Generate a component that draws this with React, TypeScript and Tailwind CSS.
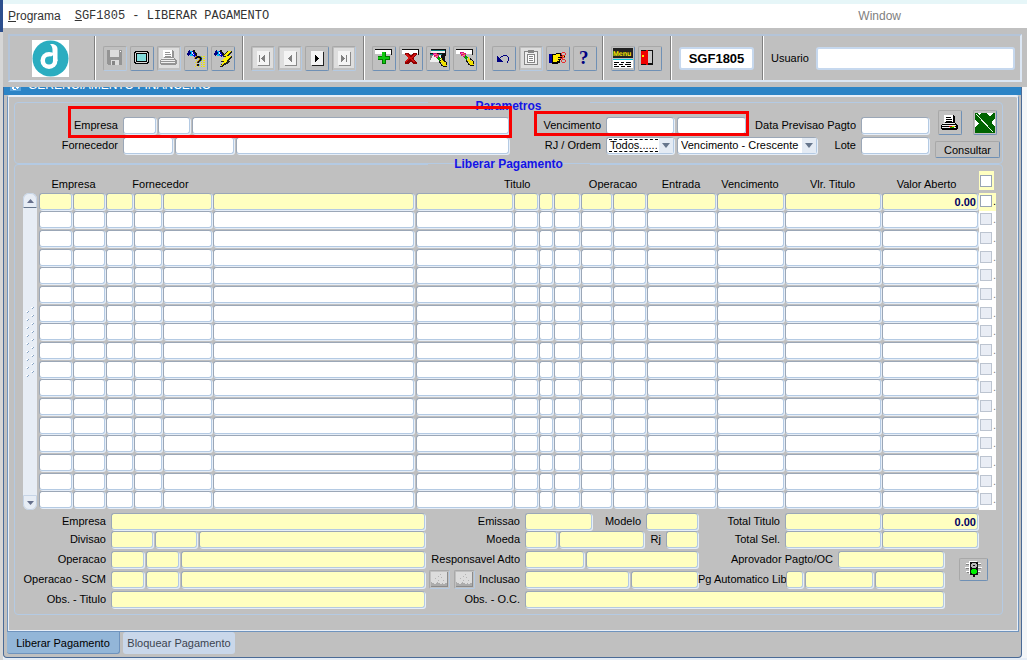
import { ReactNode, useState } from 'react';
import clsx from 'clsx';

const box =
  'h-[17px] min-w-0 rounded-[3px] border border-t-[#9ba7b7] border-l-[#9ba7b7] border-r-[#b4cae3] border-b-[#b4cae3] shadow-[1px_1px_0_#e6eef8] outline-none';

const columns = [
  { name: 'Empresa', col: 'w-[34px]' },
  { name: 'Filial', col: 'w-[33px]' },
  { name: 'Fornecedor tipo', col: 'w-[28px]' },
  { name: 'Fornecedor grupo', col: 'w-[29px]' },
  { name: 'Fornecedor codigo', col: 'w-[50px]' },
  { name: 'Fornecedor nome', col: '' },
  { name: 'Titulo', col: 'w-[98px]' },
  { name: 'Titulo serie', col: 'w-[25px]' },
  { name: 'Titulo parcela', col: 'w-[15px]' },
  { name: 'Titulo tipo', col: 'w-[27px]' },
  { name: 'Operacao', col: 'w-[32px]' },
  { name: 'Operacao codigo', col: 'w-[34px]' },
  { name: 'Entrada', col: 'w-[70px]' },
  { name: 'Vencimento', col: 'w-[68px]' },
  { name: 'Vlr. Titulo', col: 'w-[97px]' },
  { name: 'Valor Aberto', col: 'w-[97px]' },
];

const rows = Array.from({ length: 17 }, (_, i) => i);

type FieldProps = { id?: string; name?: string; className?: string; yellow?: boolean; value?: string };

function Field({ id, name, className, yellow, value }: FieldProps) {
  return (
    <input
      id={id}
      aria-label={name}
      defaultValue={value}
      className={clsx(
        box,
        'px-px text-[11px]',
        yellow ? 'bg-[#ffffc0]' : 'bg-white',
        value && 'text-right font-bold text-[#000060]',
        className
      )}
    />
  );
}

function Label({ id, className, children }: { id: string; className?: string; children: ReactNode }) {
  return (
    <label htmlFor={id} className={clsx('shrink-0 pb-[2px] text-right whitespace-nowrap', className)}>
      {children}
    </label>
  );
}

function ToolButton({ name, disabled, light, children }: { name: string; disabled?: boolean; light?: boolean; children: ReactNode }) {
  return (
    <button
      type="button"
      aria-label={name}
      disabled={disabled}
      className={clsx(
        'flex h-[25px] w-6 shrink-0 items-center justify-center rounded-[2px] border border-t-[#a8a8a8] border-l-[#a8a8a8]',
        disabled ? 'border-r-[#b4cae3] border-b-[#b4cae3]' : 'border-r-[#6f90b5] border-b-[#6f90b5]'
      )}
    >
      <svg
        width="20"
        height="20"
        viewBox="0 0 20 20"
        shapeRendering="crispEdges"
        aria-hidden="true"
        className={light ? 'bg-[#dedede]' : ''}
      >
        {children}
      </svg>
    </button>
  );
}

function Torch() {
  return (
    <>
      <path d="M3 2h1v1h1v3h-1v1h-1v1h-1v-1h-1v-2h1v-2h1z" fill="#000080" />
      <path d="M4 3h2v4h1v1h-3v-2h1v-2h-1z" fill="#00b8f0" />
      <path d="M6 3h1v1h2v1h1v3h-1v1h-1v-1h-1v-1h-1z" fill="#0000d0" />
      <path d="M7 2h2v2h1v1h-2v-1h-1zM9 5h2v3h-1v-1h-1z" fill="#111" />
      <path d="M6 4h1v2h-1zM7 6h1v1h-1z" fill="#f4f4f4" />
    </>
  );
}

function Brush() {
  return (
    <g>
      <path d="M4 4h4v1h2v3h1v1h-4v-1h-2v-2h-1z" fill="#d01080" />
      <path d="M5 5h2v1h-2zM7 7h2v1h-2z" fill="#ff60c0" />
      <path d="M7 5h1v1h-1zM6 7h1v1h-1zM8 6h1v1h-1z" fill="#ff9020" />
      <path d="M9 7h1v1h1v1h1v1h-1v2h-1v-1h-1v-1h-1v-1h1z" fill="#00a000" />
      <path d="M12 9h1v2h2v2h2v3h1v1h-4v-1h-1v-2h-2v-2h1z" fill="#f0e000" />
      <path d="M10 12h1v1h1v2h1v1h1v1h-2v-2h-1v-1h-1zM14 10h1v1h1v1h1v1h-1v-1h-2zM17 13h1v3h-1zM14 17h4v1h-4z" fill="#111" />
    </g>
  );
}

function Bar() {
  return (
    <>
      <path d="M1 1h17v6h-1v-5h-16z" fill="#111" />
      <path d="M1 2h16v4h-16z" fill="#fff" />
    </>
  );
}

function NavIcon({ dark, children }: { dark?: boolean; children: ReactNode }) {
  return (
    <>
      <path d="M5 4h12v14h-12z" fill={dark ? '#222' : '#8a8a8a'} />
      <path d="M4 3h12v14h-12z" fill="#f4f4f4" />
      <g fill={dark ? '#000' : '#808080'}>{children}</g>
    </>
  );
}

function Printer({ muted }: { muted?: boolean }) {
  const dark = muted ? '#949494' : '#000';
  return (
    <>
      <path d="M5 2h9v1h1v7h1v1h-12v-1h1z" fill={dark} />
      <path d="M4 2h9v7h-9z" fill="#fff" />
      <path d="M6 4h5v1h-5zM6 6h6v1h-6zM6 8h6v1h-6z" fill={dark} />
      <path d="M2 11h15v1h1v4h-1v1h-15v-1h-1v-4h1z" fill={dark} />
      <path d="M3 10h12v1h-12zM2 12h14v1h-14zM2 14h14v1h-14z" fill="#f0f0f0" />
      {!muted && (
        <>
          <path d="M9 13h3v1h-3z" fill="#e00000" />
          <path d="M12 13h3v1h-3z" fill="#e8d800" />
          <path d="M10 14h4v1h-4z" fill="#00a000" />
        </>
      )}
    </>
  );
}

function Group({ className, children }: { className?: string; children: ReactNode }) {
  return (
    <div
      className={clsx(
        'flex shrink-0 items-center gap-[3px] border-r border-l border-r-[#808080] border-l-white pl-[7px]',
        className
      )}
    >
      {children}
    </div>
  );
}

function Toolbar() {
  return (
    <div className="h-[59px] bg-[#c0c0c0] px-[5px] pt-[6px]">
      <div className="flex h-[48px] border-2 border-t-[#b4c4d8] border-r-[#dce7f4] border-b-[#dce7f4] border-l-[#b4c4d8]">
        <div className="flex w-[85px] shrink-0 items-center justify-center border-r border-[#808080] pr-[3px]">
          <svg width="37" height="37" viewBox="0 0 37 37" role="img" aria-label="Logo">
            <rect width="37" height="37" fill="#fff" />
            <circle cx="18.500" cy="18.500" r="18" fill="#2badc0" />
            <circle cx="17" cy="20.500" r="8.500" fill="#fff" />
            <path d="M18 4c4-.5 7.500 1 7.500 5v12l-5-2v-9c0-2.500-.8-4.500-2.500-6z" fill="#fff" />
            <circle cx="17" cy="20.500" r="4" fill="#2badc0" />
            <path d="M17 16.500c2 0 3.500-.5 4-1.500v5z" fill="#2badc0" />
          </svg>
        </div>
        <Group className="w-[148px]">
          <ToolButton name="Salvar" disabled>
            <path d="M2 2h15v15h-14v-1h-1z" fill="#949494" />
            <path d="M5 2h9v7h-9zM6 12h8v5h-8z" fill="#dcdcdc" />
            <path d="M7 13h3v4h-3z" fill="#858585" />
            <path d="M15 3h1v1h-1z" fill="#fff" />
          </ToolButton>
          <ToolButton name="Tela">
            <path d="M3 3h13v1h1v11h-1v1h-13v-1h-1v-11h1z" fill="#000" />
            <path d="M4 4h11v1h1v9h-1v1h-11v-1h-1v-9h1z" fill="#d8d8d8" />
            <path d="M4 5h11v9h-11z" fill="#000" />
            <path d="M5 6h9v7h-9z" fill="#84dede" />
          </ToolButton>
          <ToolButton name="Imprimir" disabled light>
            <Printer muted />
          </ToolButton>
          <ToolButton name="Consultar ajuda">
            {[0, 1, 2, 3, 4, 5].map(i => (
              <path key={i} d={`M${i % 2 ? 9 : 10} ${i * 2 + 8}h1v1h-1zM12 ${i * 2 + 8}h1v1h-1zM15 ${i * 2 + 8}h1v1h-1zM17 ${i * 2 + 8}h2v1h-2z`} fill="#f0e800" />
            ))}
            <Torch />
            <text x="8" y="18" fontSize="14" fontWeight="700" fontFamily="Liberation Sans, sans-serif" fill="#000">?</text>
          </ToolButton>
          <ToolButton name="Executar consulta">
            <Torch />
            <path d="M14 3h5v1l-3 4h3v1l-4 4h2v1l-8 5h-2l3-5h-2v-1l4-4h-2v-1z" fill="#222" />
            <path d="M15 3h3l-4 5h4l-5 5h2l-7 5 3-5h-2l4-5h-2z" fill="#fff000" />
          </ToolButton>
        </Group>
        <Group className="w-[121px]">
          <ToolButton name="Primeiro" disabled light>
            <NavIcon><path d="M6 7h1v7h-1zM8 10h1v-1h1v-1h1v-1h1v7h-1v-1h-1v-1h-1v-1h-1z" /></NavIcon>
          </ToolButton>
          <ToolButton name="Anterior" disabled light>
            <NavIcon><path d="M8 10h1v-1h1v-1h1v-1h1v7h-1v-1h-1v-1h-1v-1h-1z" /></NavIcon>
          </ToolButton>
          <ToolButton name="Proximo">
            <NavIcon dark><path d="M8 7h1v1h1v1h1v1h1v1h-1v1h-1v1h-1v1h-1z" /></NavIcon>
          </ToolButton>
          <ToolButton name="Ultimo" disabled light>
            <NavIcon><path d="M7 7h1v1h1v1h1v1h1v1h-1v1h-1v1h-1v1h-1zM12 7h1v7h-1z" /></NavIcon>
          </ToolButton>
        </Group>
        <Group className="w-[120px]">
          <ToolButton name="Inserir">
            <Bar />
            <path d="M8 4h4v4h4v4h-4v4h-4v-4h-4v-4h4z" fill="#007800" />
            <path d="M8 4h3v5h4v2h-4v4h-2v-4h-5v-2h4z" fill="#10c810" />
          </ToolButton>
          <ToolButton name="Remover">
            <Bar />
            <path d="M4 5h4v1h1v1h2v-1h1v-1h4v2h-1v1h-1v1h-1v3h1v1h1v1h1v2h-4v-1h-1v-1h-2v1h-1v1h-4v-2h1v-1h1v-1h1v-3h-1v-1h-1v-1h-1z" fill="#900000" />
            <path d="M5 6h2v1h1v1h1v1h2v-1h1v-1h1v-1h2v1h-1v1h-1v1h-1v1h-1v1h1v1h1v1h1v1h-2v-1h-1v-1h-1v-1h-2v1h-1v1h-1v1h-2v-1h1v-1h1v-1h1v-2h-1v-1h-1v-1h-1z" fill="#d41414" />
          </ToolButton>
          <ToolButton name="Limpar tela">
            <path d="M3 1h15v7h-1v6h-15v-9h1z" fill="#111" />
            <path d="M3 2h14v1h-14zM2 6h12v1h-12z" fill="#008080" />
            <path d="M3 3h14v2h-14zM2 7h11v5h-2v2h-9z" fill="#f0f0f0" />
            <path d="M2 7h3v1h-1v2h-1v2h-1z" fill="#808080" />
            <g transform="translate(1 1)"><Brush /></g>
          </ToolButton>
          <ToolButton name="Limpar registro">
            <Bar />
            <g transform="translate(1 0)"><Brush /></g>
          </ToolButton>
        </Group>
        <Group className="w-[119px] pl-[5px]">
          <ToolButton name="Desfazer">
            <path d="M3 8h1v1h1v1h1v1h1v1h1v1h1v1h-6z" fill="#000080" />
            <path d="M6 9h1v1h-1zM7 8h2v1h-2zM9 7h4v1h-4zM13 8h1v1h-1zM14 9h1v4h-1zM13 13h1v2h-1z" fill="#000080" />
          </ToolButton>
          <ToolButton name="Colar" disabled light>
            <path d="M3 3h4v-1h6v1h4v14h-14z" fill="#858585" />
            <path d="M4 4h12v12h-12z" fill="#eee" />
            <path d="M7 3h6v2h-6zM6 6h8v9h-8z" fill="#858585" />
            <path d="M7 7h6v7h-6z" fill="#fff" />
            <path d="M8 8h4v1h-4zM8 10h4v1h-4zM8 12h4v1h-4z" fill="#858585" />
          </ToolButton>
          <ToolButton name="Recortar">
            <path d="M1 6h3v9h-3z" fill="#0000a0" />
            <path d="M4 6h4v-1h5v2h4v3h-4v2h-1v3h-2v1h-6z" fill="#000" />
            <path d="M5 7h3v-1h4v2h4v1h-6v1h2v1h-2v1h1v1h-2v1h-4z" fill="#ffe800" />
            <path d="M14 4h3v1h-3zM13 5h1v2h-1zM17 5h1v2h-1zM14 7h3v1h-3zM14 11h3v1h-3zM13 12h1v2h-1zM17 12h1v2h-1zM14 14h3v1h-3zM12 8h3v1h-3zM14 9h3v1h-3zM12 10h3v1h-3z" fill="#e83030" />
          </ToolButton>
          <ToolButton name="Ajuda">
            <text x="4" y="16" fontSize="19" fontWeight="700" fontFamily="Liberation Serif, serif" fill="#000080">?</text>
          </ToolButton>
        </Group>
        <Group className="w-[68px]">
          <ToolButton name="Menu">
            <rect width="20" height="10" fill="#222" />
            <text x="0" y="8" fontSize="7" fontWeight="700" fontFamily="Liberation Sans, sans-serif" textRendering="geometricPrecision" fill="#fff200">Menu</text>
            <path d="M0 11h20v9h-20z" fill="#fff" />
            <path d="M0 11h20v1h-20z" fill="#00c8d8" />
            <path d="M1 14h5v1h-5zM8 14h3v1h-3zM13 14h5v1h-5zM1 16h3v1h-3zM6 16h4v1h-4zM12 16h6v1h-6zM1 18h5v1h-5zM8 18h4v1h-4zM14 18h4v1h-4z" fill="#000" />
          </ToolButton>
          <ToolButton name="Sair">
            <path d="M1 2h12v15h-12z" fill="#111" />
            <path d="M8 3h4v12h-4z" fill="#c8c8c8" />
            <path d="M1 3h5v-1h2v15h-2v-1h-5z" fill="#f00000" />
            <path d="M2 7h2v2h-2z" fill="#ffe000" />
          </ToolButton>
        </Group>
        <Group className="w-[92px]">
          <input
            aria-label="Programa atual"
            defaultValue="SGF1805"
            className="h-[23px] w-[75px] rounded-[3px] border-2 border-[#c6d8ee] bg-white text-center text-[13px] font-bold outline-none"
          />
        </Group>
        <div className="flex min-w-0 flex-1 items-center border-l border-white pr-[5px] pl-[7px]">
          <label htmlFor="usuario" className="mr-[7px]">Usuario</label>
          <input
            id="usuario"
            className="h-[23px] min-w-0 flex-1 rounded-[3px] border-2 border-[#c6d8ee] bg-white px-1 outline-none"
          />
        </div>
      </div>
    </div>
  );
}

function Select({ id, name, options, className, focused }: { id?: string; name?: string; options: string[]; className: string; focused?: boolean }) {
  return (
    <div className={clsx('relative shrink-0', className)}>
      <select
        id={id}
        aria-label={name}
        className={clsx(box, 'block w-full appearance-none bg-white pr-4 pl-[3px] text-[11px] leading-[15px]')}
      >
        {options.map(o => (
          <option key={o}>{o}</option>
        ))}
      </select>
      {focused && (
        <span className="pointer-events-none absolute top-[2px] right-4 bottom-[2px] left-[3px] border-y border-dashed border-black" />
      )}
      <span className="pointer-events-none absolute top-px right-px flex h-[15px] w-[14px] items-center justify-center bg-[#e4ebf4]">
        <svg width="8" height="5" viewBox="0 0 8 5" aria-hidden="true">
          <path d="M0 0h8l-4 5z" fill="#66768c" />
        </svg>
      </span>
    </div>
  );
}

function Parametros() {
  return (
    <fieldset className="min-w-0 rounded-[4px] border border-[#b4cae3] pb-[5px]">
      <legend className="mx-auto h-[11px] w-[162px] text-center text-[12px] leading-[18px] font-bold text-[#1414e6]">
        Parametros
      </legend>
      <div className="flex pr-[2px]">
        <div className="flex min-w-0 flex-1 flex-col gap-[3px] pt-[9px]">
          <div className="flex items-center">
            <div className="relative flex min-w-0 flex-1 items-center">
              <Label id="empresa" className="mr-[5px] w-[103px]">Empresa</Label>
              <Field id="empresa" className="mr-[2px] w-[33px]" />
              <Field name="Filial" className="mr-[2px] w-[32px]" />
              <Field name="Nome da empresa" className="flex-1" />
              <span className="pointer-events-none absolute -top-[11px] -right-[3px] -bottom-[4px] left-[53px] border-[3px] border-[#f80000]" />
            </div>
            <div className="relative flex items-center">
              <Label id="vencimento" className="mr-[5px] w-[92px]">Vencimento</Label>
              <Field id="vencimento" className="mr-[3px] w-[68px]" />
              <Field name="Vencimento final" className="w-[69px]" />
              <span className="pointer-events-none absolute -top-[6px] -right-[3px] -bottom-[2px] left-[25px] border-[3px] border-[#f80000]" />
            </div>
            <Label id="previsao" className="mr-[5px] w-[110px]">Data Previsao Pagto</Label>
            <Field id="previsao" className="w-[68px]" />
          </div>
          <div className="flex items-center">
            <Label id="fornecedor" className="mr-[5px] w-[103px]">Fornecedor</Label>
            <Field id="fornecedor" className="mr-[2px] w-[50px]" />
            <Field name="Codigo do fornecedor" className="mr-[2px] w-[59px]" />
            <Field name="Nome do fornecedor" className="flex-1" />
            <Label id="rj" className="mr-[5px] w-[92px]">RJ / Ordem</Label>
            <Select id="rj" options={['Todos......']} className="mr-[3px] w-[68px]" focused />
            <Select name="Ordem" options={['Vencimento - Crescente', 'Vencimento - Decrescente']} className="w-[140px]" />
            <Label id="lote" className="mr-[5px] w-[39px]">Lote</Label>
            <Field id="lote" className="w-[68px]" />
          </div>
        </div>
        <div className="ml-[6px] w-[65px] shrink-0 pt-[2px]">
          <div className="flex justify-between px-[3px] pb-[6px]">
            <ToolButton name="Imprimir">
              <Printer />
            </ToolButton>
            <ToolButton name="Exportar para Excel">
              <path d="M0 0h20v20h-20z" fill="#006400" />
              <path d="M2 0h1v1h1v1h1v-1h1v-1zM12 0h6v1h-1v1h-1v1h-2v-1h-1v-1h-1zM0 7h1v1h1v1h1v1h1v1h-1v1h-1v1h-1v1h-1zM20 6h-1v1h-1v1h-1v3h1v1h1v1h1z" fill="#fff" />
              <path d="M1 1l17 18" stroke="#e8f4e8" strokeWidth="1" />
            </ToolButton>
          </div>
          <button
            type="button"
            className="h-[17px] w-full rounded-[2px] border border-t-[#a8a8a8] border-r-[#6f90b5] border-b-[#6f90b5] border-l-[#a8a8a8] leading-[14px]"
          >
            Consultar
          </button>
        </div>
      </div>
    </fieldset>
  );
}

function ScrollBar() {
  return (
    <div className="mt-[22px] flex w-[14px] shrink-0 flex-col justify-between rounded-[6px] bg-[#e7edf5]">
      <button type="button" aria-label="Rolar para cima" className="flex h-[15px] items-center justify-center rounded-t-[6px] border border-[#c6d4e6] border-b-[#66768c]">
        <svg width="7" height="4" viewBox="0 0 7 4" aria-hidden="true"><path d="M0 4h7l-3.500-4z" fill="#66708c" /></svg>
      </button>
      <svg width="14" height="76" viewBox="0 0 14 76" shapeRendering="crispEdges" aria-hidden="true" className="mb-4">
        {[0, 1, 2, 3, 4, 5, 6, 7, 8].map(i => (
          <g key={i}>
            <path d={`M8 ${i * 8 + 1}h2v1h-2zM3 ${i * 8 + 5}h2v1h-2z`} fill="#fff" />
            <path d={`M9 ${i * 8 + 2}h1v1h-1zM10 ${i * 8 + 1}h1v1h-1zM4 ${i * 8 + 6}h1v1h-1zM5 ${i * 8 + 5}h1v1h-1z`} fill="#88a4c4" />
          </g>
        ))}
      </svg>
      <button type="button" aria-label="Rolar para baixo" className="flex h-[15px] items-center justify-center rounded-b-[6px] border border-[#c6d4e6]">
        <svg width="7" height="4" viewBox="0 0 7 4" aria-hidden="true"><path d="M0 0h7l-3.500 4z" fill="#66708c" /></svg>
      </button>
    </div>
  );
}

function Check({ name, muted }: { name: string; muted?: boolean }) {
  const [on, setOn] = useState(false);
  return (
    <input
      type="checkbox"
      aria-label={name}
      checked={on}
      onChange={() => setOn(!on)}
      className={clsx(
        'block size-3 shrink-0 appearance-none border checked:bg-[#66768c]',
        muted ? 'border-[#bcc4d0] bg-[#e9edf5]' : 'border-[#98a4b5] bg-white'
      )}
    />
  );
}

function Titulos() {
  return (
    <div className="flex pr-[6px] pl-[8px]">
      <ScrollBar />
      <table className="ml-[2px] w-full min-w-0 flex-1 table-fixed border-collapse">
        <colgroup>
          {columns.map(c => (
            <col key={c.name} className={c.col} />
          ))}
          <col className="w-[17px]" />
        </colgroup>
        <thead>
          <tr className="h-[22px]">
            <th colSpan={2} className="p-0 pt-1 pl-[2px] font-normal">Empresa</th>
            <th colSpan={3} className="p-0 pt-1 pl-[2px] font-normal">Fornecedor</th>
            <th />
            <th colSpan={4} className="p-0 pt-1 pl-[88px] text-left font-normal">Titulo</th>
            <th colSpan={2} className="p-0 pt-1 pr-[2px] font-normal">Operacao</th>
            <th className="p-0 pt-1 pr-[2px] font-normal">Entrada</th>
            <th className="p-0 pt-1 pr-[2px] font-normal">Vencimento</th>
            <th className="p-0 pt-1 pr-[2px] font-normal">Vlr. Titulo</th>
            <th className="p-0 pt-1 pr-2 font-normal">Valor Aberto</th>
            <th className="p-0 pb-[3px]">
              <div className="flex h-[19px] w-[15px] items-center bg-[#ffffc0] pl-px">
                <Check name="Selecionar todos" />
              </div>
            </th>
          </tr>
        </thead>
        <tbody>
          {rows.map(r => (
            <tr key={r} className={r % 3 === 0 ? 'h-[18px]' : 'h-[19px]'}>
              {columns.map((c, i) => (
                <td key={c.name} className={clsx('p-0 align-top', i === 5 ? 'pr-[2px]' : 'pr-px')}>
                  <Field
                    name={`${c.name} ${r + 1}`}
                    yellow={r === 0}
                    value={r === 0 && i === 15 ? '0.00' : undefined}
                    className="block w-full"
                  />
                </td>
              ))}
              <td className={clsx('p-0 pl-px align-top', r === 0 ? 'bg-[#ffffc0]' : 'bg-white')}>
                <div className="flex h-[16px] items-center justify-between">
                  <Check name={`Selecionar titulo ${r + 1}`} muted={r > 0} />
                  <span className={clsx('w-[3px]', r > 0 && 'text-[#808080]')}>.</span>
                </div>
              </td>
            </tr>
          ))}
        </tbody>
      </table>
    </div>
  );
}

function Detalhes() {
  return (
    <div className="pt-[3px] pb-[6px]">
      <div className="flex flex-col gap-px pr-[24px]">
        <div className="flex items-center">
          <Label id="det-empresa" className="mr-[5px] w-[91px]">Empresa</Label>
          <Field yellow id="det-empresa" className="flex-1" />
          <Label id="emissao" className="mr-[5px] w-[95px]">Emissao</Label>
          <Field yellow id="emissao" className="w-[67px]" />
          <Label id="modelo" className="mr-[5px] w-[49px]">Modelo</Label>
          <Field yellow id="modelo" className="w-[52px]" />
          <Label id="total-titulo" className="mr-[5px] w-[82px]">Total Titulo</Label>
          <Field yellow id="total-titulo" className="mr-px w-[96px]" />
          <Field yellow name="Total aberto" value="0.00" className="w-[96px]" />
        </div>
        <div className="flex items-center">
          <Label id="divisao" className="mr-[5px] w-[91px]">Divisao</Label>
          <Field yellow id="divisao" className="mr-[2px] w-[42px]" />
          <Field yellow name="Divisao codigo" className="mr-[2px] w-[42px]" />
          <Field yellow name="Divisao nome" className="flex-1" />
          <Label id="moeda" className="mr-[5px] w-[95px]">Moeda</Label>
          <Field yellow id="moeda" className="mr-[2px] w-[32px]" />
          <Field yellow name="Moeda nome" className="w-[85px]" />
          <Label id="det-rj" className="mr-[5px] w-[17px]">Rj</Label>
          <Field yellow id="det-rj" className="w-[32px]" />
          <Label id="total-sel" className="mr-[5px] w-[82px]">Total Sel.</Label>
          <Field yellow id="total-sel" className="mr-px w-[96px]" />
          <Field yellow name="Total selecionado aberto" className="w-[96px]" />
        </div>
      </div>
      <div className="flex pt-[3px] pr-[14px]">
        <div className="flex min-w-0 flex-1 flex-col gap-[3px]">
          <div className="flex items-center">
            <Label id="operacao" className="mr-[5px] w-[91px]">Operacao</Label>
            <Field yellow id="operacao" className="mr-[2px] w-[33px]" />
            <Field yellow name="Operacao codigo" className="mr-[2px] w-[33px]" />
            <Field yellow name="Operacao nome" className="flex-1" />
            <Label id="responsavel" className="mr-[5px] w-[95px]">Responsavel Adto</Label>
            <Field yellow id="responsavel" className="mr-[2px] w-[59px]" />
            <Field yellow name="Responsavel nome" className="w-[112px]" />
            <Label id="aprovador" className="mr-[5px] w-[135px]">Aprovador Pagto/OC</Label>
            <Field yellow id="aprovador" className="w-[106px]" />
          </div>
          <div className="flex items-center">
            <Label id="scm" className="mr-[5px] w-[91px]">Operacao - SCM</Label>
            <Field yellow id="scm" className="mr-[2px] w-[33px]" />
            <Field yellow name="SCM codigo" className="mr-[2px] w-[33px]" />
            <Field yellow name="SCM nome" className="flex-1" />
            <div className="flex h-[17px] w-[50px] items-center justify-between pl-[4px]">
              {['Anexo', 'Observacao'].map(n => (
                <button key={n} type="button" disabled aria-label={n} className="rounded-[2px] border border-t-[#a8a8a8] border-r-[#b4cae3] border-b-[#b4cae3] border-l-[#a8a8a8] p-px">
                  <svg width="17" height="15" viewBox="0 0 17 15" shapeRendering="crispEdges" aria-hidden="true">
                    <path d="M0 0h17v15h-17z" fill="#8a8a8a" />
                    <path d="M0 0h16v14h-16z" fill="#dcdcdc" />
                    <path d="M0 10h1v1h2v1h2v-1h1v-1h1v1h2v1h2v-1h1v1h2v-1h2v3h-16z" fill="#acacac" />
                    <path d="M4 6h1v1h-1zM7 4h1v1h-1zM10 5h1v1h-1zM12 8h1v1h-1zM7 8h1v1h-1zM9 2h1v1h-1z" fill="#b4b4b4" />
                  </svg>
                </button>
              ))}
            </div>
            <Label id="inclusao" className="mr-[5px] w-[45px]">Inclusao</Label>
            <Field yellow id="inclusao" className="mr-[2px] w-[104px]" />
            <Field yellow name="Inclusao usuario" className="w-[67px]" />
            <Label id="lib" className="mr-px w-[87px]">Pg Automatico Lib</Label>
            <Field yellow id="lib" className="mr-[2px] w-[17px]" />
            <Field yellow name="Liberacao data" className="mr-[2px] w-[68px]" />
            <Field yellow name="Liberacao usuario" className="w-[69px]" />
          </div>
          <div className="flex items-center">
            <Label id="obs-titulo" className="mr-[5px] w-[91px]">Obs. - Titulo</Label>
            <Field yellow id="obs-titulo" className="flex-1" />
            <Label id="obs-oc" className="mr-[5px] w-[95px]">Obs. - O.C.</Label>
            <Field yellow id="obs-oc" className="w-[419px]" />
          </div>
        </div>
        <button
          type="button"
          aria-label="Status da liberacao"
          className="mt-[7px] ml-[15px] flex h-[23px] w-[29px] items-center justify-center rounded-[2px] border border-t-[#a8a8a8] border-r-[#6f90b5] border-b-[#6f90b5] border-l-[#a8a8a8]"
        >
          <svg width="17" height="17" viewBox="0 0 17 17" shapeRendering="crispEdges" aria-hidden="true">
            <path d="M1 2h15v1h-15zM0 6h17v1h-17zM1 10h15v1h-15z" fill="#fff" />
            <path d="M1 3h15v1h-15zM1 7h15v1h-15zM2 11h13v1h-13z" fill="#808080" />
            <path d="M5 1h8v13h-3v2h-2v-2h-3z" fill="#111" />
            <path d="M4 0h8v1h-7v12h-1z" fill="#fff" />
            <path d="M7 2h4v1h1v3h-1v1h-4v-1h-1v-3h1z" fill="#b8b8b8" />
            <path d="M8 4h2v1h-2z" fill="#111" />
            <path d="M7 8h4v1h1v3h-1v1h-4v-1h-1v-3h1z" fill="#00f000" />
          </svg>
        </button>
      </div>
    </div>
  );
}

export default function App() {
  return (
    <div className="flex min-h-screen bg-[#c0c0c0] font-['Liberation_Sans',Arial,sans-serif] text-[11px] leading-[14px] text-black">
      <div className="w-[3px] shrink-0 bg-[#d6d6d6]">
        <div className="h-8 bg-[#2c4f8e]" />
      </div>
      <div className="flex min-w-0 flex-1 flex-col bg-[#f4f6f8]">
        <div className="h-1 bg-[#e6f6f8]" />
        <nav className="flex h-6 items-center bg-white pl-[5px] text-[12px] text-[#333]">
          <a href="#programa"><u>P</u>rograma</a>
          <a href="#liberar" className="ml-[14px] font-['Liberation_Mono',monospace]"><u>S</u>GF1805 - LIBERAR PAGAMENTO</a>
          <a href="#window" className="mr-[126px] ml-auto text-[#808080]">Window</a>
        </nav>
        <Toolbar />
        <div className="mr-[5px] flex flex-1 flex-col rounded-b-[4px] border-x border-b border-[#4a6a96] bg-[#c0c0c0]">
          <div className="flex h-2 overflow-hidden bg-[#2c84c6] pl-[6px] text-[12px] leading-3 text-white">
            <svg width="11" height="4" viewBox="0 0 11 4" shapeRendering="crispEdges" aria-hidden="true">
              <path d="M0 0h11v4h-11z" fill="#5aa4dc" />
              <path d="M2 0h2v2h2v1h-3v-1h-1zM6 0h3v1h-1v1h-1v-1h-1z" fill="#fff" />
            </svg>
            <h1 className="-mt-2 ml-[7px] whitespace-nowrap">GERENCIAMENTO FINANCEIRO</h1>
          </div>
          <main className="mr-[2px] ml-[3px] flex flex-col rounded-t-[3px] border border-t-2 border-[#6f93bd] border-t-[#e8eff8] pr-[15px] pb-[16px] pl-[6px] shadow-[inset_1px_-1px_0_#e8eff8,inset_-1px_0_0_#e8eff8]">
            <Parametros />
            <fieldset className="-mt-[7px] min-w-0 rounded-[4px] border border-[#b4cae3]">
              <legend className="mx-auto w-[162px] text-center text-[12px] font-bold text-[#1414e6]">Liberar Pagamento</legend>
              <Titulos />
              <Detalhes />
            </fieldset>
          </main>
          <div className="ml-[3px] flex gap-[3px]">
            <button type="button" className="h-[22px] w-[113px] rounded-b-[3px] border-r border-b border-[#6f93bd] bg-[#93b6d8] pt-px">
              Liberar Pagamento
            </button>
            <button type="button" className="h-[22px] w-[112px] rounded-[3px] bg-[#c9d7ea] text-[#3c4450]">
              Bloquear Pagamento
            </button>
          </div>
        </div>
        <div className="h-[2px] bg-[#e6edf6]" />
      </div>
    </div>
  );
}
